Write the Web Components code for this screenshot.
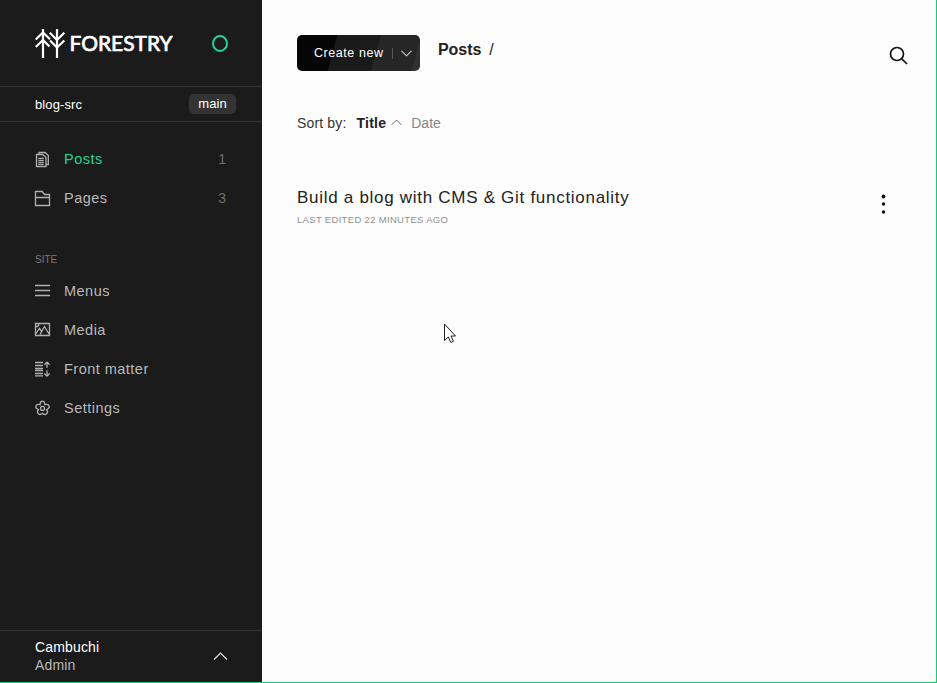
<!DOCTYPE html>
<html lang="en"><head><meta charset="utf-8"><title>Forestry</title>
<style>html,body{margin:0;height:100%}body{overflow:hidden;font-family:"Liberation Sans",Arial,sans-serif;background:#fdfdfd}</style></head>
<body><forestry-app></forestry-app>
<script>
const define = (name, html) => {
  const t = document.createElement('template');
  t.innerHTML = html;
  customElements.define(name, class extends HTMLElement {
    constructor() { super(); this.attachShadow({mode:'open'}).append(t.content.cloneNode(true)); }
  });
};

define('forestry-logo', `<style>:host{display:block;width:138px;height:31px}svg{display:block}text{font:400 20.5px Lato,sans-serif;fill:#fff;stroke:#fff;stroke-width:.7px}</style>
<svg width="138" height="31" viewBox="0 -1 138 31"><g fill="none" stroke="#fff" stroke-width="2.200"><path d="M8 0V29M22 0V29"/><path d="M.7 10.500 8 3.500 15 10.200M.7 18 8 11 14.500 17.500M14.800 3.800 22 11 29.300 3.800M15 11.500 22 18.500 29.300 11.500"/></g>
<text x="34.500" y="22" textLength="103" lengthAdjust="spacingAndGlyphs">FORESTRY</text></svg>`);

define('status-ring', `<style>:host{display:block;width:16px;height:17px;box-sizing:border-box;border:2px solid #23d397;border-radius:50%}</style>`);

define('branch-tag', `<style>:host{display:block;box-sizing:border-box;width:47px;height:20px;line-height:19px;text-align:center;border-radius:5px;background:#333;color:#fff;font-size:13px}</style><slot></slot>`);

define('site-bar', `<style>:host{display:flex;box-sizing:border-box;height:36px;align-items:center;justify-content:space-between;padding:0 26px 0 35px;border:solid #363636;border-width:1px 0;color:#fff;font-size:13px;letter-spacing:.11px}branch-tag{letter-spacing:0}</style><slot></slot>`);

define('nav-item', `<style>:host{display:flex;height:39px;align-items:center;padding:0 36px 0 34px;color:#b9b9b9;font-size:14.500px;letter-spacing:.48px;line-height:16px}
:host([active]){color:#23d397}.label{flex:1;margin-left:13px}::slotted(svg){display:block;flex:none;width:17px;height:17px;fill:none;stroke:#b0b0b0;stroke-width:1.300}:host([low]) ::slotted(svg){margin-top:2px}::slotted([slot=count]){color:#6e6e6e;font-size:14px;letter-spacing:0}</style>
<slot name="icon"></slot><span class="label"><slot></slot></span><slot name="count"></slot>`);

define('nav-heading', `<style>:host{display:block;padding:0 35px;font-size:10px;line-height:12px;color:#777}</style><slot></slot>`);

define('user-panel', `<style>:host{display:flex;box-sizing:border-box;height:52px;margin-top:auto;padding:0 34px 0 35px;border-top:1px solid #363636;align-items:center;justify-content:space-between;font-size:14px;line-height:18px;color:#fff;letter-spacing:.16px}.who{margin-bottom:2px}.role{color:#b9b9b9}svg{display:block}</style>
<div class="who"><div><slot></slot></div><div class="role"><slot name="role"></slot></div></div>
<svg width="15" height="9" fill="none" stroke="#ddd" stroke-width="1.200"><path d="M1 7.500 7.500 1 14 7.500"/></svg>`);

define('side-bar', `<style>:host{display:flex;flex-direction:column;background:#1b1b1b;min-height:0}
header{display:flex;height:86px;box-sizing:border-box;padding:28px 34.500px 0 35px;justify-content:space-between}status-ring{margin-top:6.500px}
.content{padding-top:17px}.site{padding-top:37px}nav-heading{margin-bottom:5px}</style>
<header><forestry-logo></forestry-logo><status-ring></status-ring></header>
<site-bar><span>blog-src</span><branch-tag>main</branch-tag></site-bar>
<nav class="content">
<nav-item active low><svg slot="icon" viewBox="0 0 17 17"><path d="M5 3.500V1.500H11.200L14.300 4.500V13.500H12M2.500 3.500H8.700L12 6.500V15.500H2.500ZM4.300 7.300H9.800M4.300 9.300H9.800M4.300 11.300H9.800M4.300 13.300H9.800"/></svg>Posts<span slot="count">1</span></nav-item>
<nav-item low><svg slot="icon" viewBox="0 0 17 17"><path d="M1.500 15.500V1.500H8.200L10.500 4.500H15.500V15.500ZM1.500 7.500H15.500"/></svg>Pages<span slot="count">3</span></nav-item>
</nav>
<nav class="site"><nav-heading>SITE</nav-heading>
<nav-item><svg slot="icon" viewBox="0 0 17 17"><path d="M1 3.500H16M1 8.500H16M1 13.500H16"/></svg>Menus</nav-item>
<nav-item><svg slot="icon" viewBox="0 0 17 17"><path d="M1.500 2.500H15.500V14.500H1.500ZM2 12.500 5.500 7.500 8 11M6 13.500 10.500 5.500 15 13M2 5.500H3.500L4.800 4V2.800"/></svg>Media</nav-item>
<nav-item low><svg slot="icon" viewBox="0 0 17 17"><path d="M1 1.500H9M1 4.500H9M1 7.500H9M1 9.500H9M1 12.500H9M1 14.800H9M13 6.700V1M10.300 3.700 13 1.200 15.700 3.700M13 9.500V15.200M10.300 12.500 13 15 15.700 12.500"/></svg>Front matter</nav-item>
<nav-item low><svg slot="icon" viewBox="0 0 17 17"><path d="M6.100 4.700C6.100 0 10.900 0 10.900 4.700C15.400 3.300 16.900 7.800 12.600 9.500C15.300 13.200 11.300 16 8.500 13.300C5.700 16 1.700 13.200 4.400 9.500C.1 7.800 1.600 3.300 6.100 4.700Z"/><circle cx="8.500" cy="8.400" r="2"/></svg>Settings</nav-item>
</nav>
<user-panel>Cambuchi<span slot="role">Admin</span></user-panel>`);

define('create-button', `<style>:host{display:flex;box-sizing:border-box;width:123px;height:36px;align-items:center;padding:0 8px 0 17px;border-radius:5px;color:#fff;font-size:12.500px;letter-spacing:.56px;background:linear-gradient(105deg,#050505 30.200%,#1a1a1a 30.700%,#1b1b1b 63%,#262626 63.500%,#262626 93.500%,#303030 94%)}
.label{flex:1;white-space:nowrap}.rule{width:1px;height:11px;background:#555;margin-right:8px}svg{display:block}</style>
<span class="label"><slot></slot></span><span class="rule"></span><svg width="11" height="7" fill="none" stroke="#ccc" stroke-width="1.100"><path d="M.5.800 5.500 5.800 10.500.800"/></svg>`);

define('bread-crumb', `<style>:host{display:flex;gap:8px;font-size:16px;line-height:18px;color:#222}b{letter-spacing:-.05px}</style><b><slot></slot></b><span>/</span>`);

define('sort-bar', `<style>:host{display:flex;align-items:center;font-size:14px;line-height:16px;color:#333}.by{letter-spacing:.15px;margin-right:10px}b{color:#222;letter-spacing:.25px;margin-right:5px}svg{display:block;margin:0 9px 2px 0}.date{color:#868686}</style>
<span class="by">Sort by:</span><b>Title</b><svg width="11" height="7" fill="none" stroke="#666"><path d="M.5 6 5.500 1 10.500 6"/></svg><span class="date">Date</span>`);

define('post-row', `<style>:host{display:flex;justify-content:space-between}.title{font-size:17px;line-height:20px;letter-spacing:.71px;color:#222}.meta{font-size:9.500px;line-height:12px;margin-top:6px;letter-spacing:.32px;color:#909090}svg{display:block;margin:6px 50px 0 0}</style>
<div><div class="title"><slot></slot></div><div class="meta"><slot name="meta"></slot></div></div>
<svg width="5" height="20" fill="#111"><circle cx="2.500" cy="2.500" r="1.900"/><circle cx="2.500" cy="10" r="1.700"/><circle cx="2.500" cy="18" r="1.700"/></svg>`);

define('mouse-pointer', `<style>:host{display:block;position:absolute;left:444px;top:323px}svg{display:block}</style>
<svg width="13" height="21" fill="#fff" stroke="#222"><path d="M.5 1V17.500L4.300 14 6.800 19.500 9.500 18.300 7 13H11.500Z"/></svg>`);

define('content-area', `<style>:host{display:block;padding:35px 0 0 35px;background:#fdfdfd}
.top{display:flex;height:36px}.top bread-crumb{margin:6px auto 0 18px}.search{display:block;margin:11px 28px 0 0}sort-bar{margin-top:44px}post-row{margin-top:57px}</style>
<div class="top"><create-button>Create new</create-button><bread-crumb>Posts</bread-crumb>
<svg class="search" width="19" height="19" fill="none" stroke="#111" stroke-width="1.700"><circle cx="8" cy="8" r="6.500"/><path d="M12.800 12.800 18 18"/></svg></div>
<sort-bar></sort-bar>
<post-row>Build a blog with CMS &amp; Git functionality<span slot="meta">LAST EDITED 22 MINUTES AGO</span></post-row>`);

define('forestry-app', `<style>:host{display:grid;box-sizing:border-box;width:937px;height:683px;grid-template-columns:262px 1fr;grid-template-rows:100%;border:solid #16cc7c;border-width:0 1px 1px 0;position:relative}</style>
<side-bar></side-bar><content-area></content-area><mouse-pointer></mouse-pointer>`);
</script></body></html>
